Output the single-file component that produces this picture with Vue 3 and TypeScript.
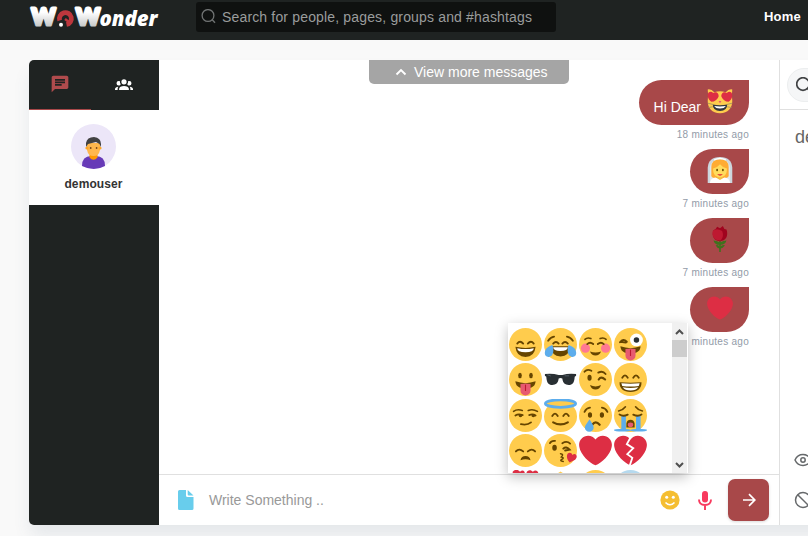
<script setup lang="ts">
interface Shape {
  d: string
  fill: string
  stroke: string
  width: number
}

interface Message {
  id: number
  text: string
  emoji: string
  time: string
}

const brown = '#664500'

const fill = (d: string, color: string): Shape => ({ d, fill: color, stroke: 'none', width: 0 })
const line = (d: string, width = 2, color = brown): Shape => ({ d, fill: 'none', stroke: color, width })
const dot = (cx: number, cy: number, rx: number, ry = rx, color = brown): Shape =>
  fill(`M${cx - rx} ${cy}a${rx} ${ry} 0 1 0 ${rx * 2} 0a${rx} ${ry} 0 1 0 ${-rx * 2} 0z`, color)

const face = dot(18, 18, 18, 18, '#ffcc4d')
const heartPath =
  'M35.885 11.833c0-5.45-4.418-9.868-9.867-9.868-3.308 0-6.227 1.633-8.018 4.129-1.791-2.496-4.71-4.129-8.017-4.129-5.45 0-9.868 4.417-9.868 9.868 0 .772.098 1.52.266 2.241C1.751 22.587 11.216 31.568 18 34.034c6.783-2.466 16.249-11.447 17.617-19.959.17-.721.268-1.469.268-2.242z'
const closedEyes = line('M9 17Q12 13 15.5 17M20.5 17Q24 13 27 17')
const tongue = [
  fill('M7 20Q18 24 29 20Q29 25 24 27H12Q7 25 7 20z', brown),
  fill('M12.5 23Q18 21.5 23.5 23V30a5.5 5.5 0 0 1-11 0z', '#e75a70'),
  line('M18 24V30', 1.2, '#be1931'),
]

const emojis: Record<string, Shape[]> = {
  smile: [
    face,
    closedEyes,
    fill('M7 20.5Q18 23 29 20.5Q28 31.5 18 31.5T7 20.5z', brown),
    fill('M9 22Q18 24 27 22Q27 26.5 18 26.5T9 22z', '#fff'),
  ],
  joy: [
    face,
    line('M4.5 14Q7 10 11 9.5M31.5 14Q29 10 25 9.5'),
    line('M10 17Q13 13.5 16 17M20 17Q23 13.5 26 17'),
    fill('M8 20H28Q28 31 18 31T8 20z', brown),
    fill('M10 21H26Q26 25 18 25T10 21z', '#fff'),
    fill('M9 18.5C11 22 11 31 5.5 31.5C-.5 32 .2 25 2.8 22Q5 20 9 18.5zM27 18.5C25 22 25 31 30.5 31.5C36.5 32 35.8 25 33.2 22Q31 20 27 18.5z', '#5dadec'),
  ],
  blush: [
    face,
    dot(7, 22, 5, 5, '#ff7892'),
    dot(29, 22, 5, 5, '#ff7892'),
    line('M6.5 12.5Q9 10 13 11.5M29.5 12.5Q27 10 23 11.5', 1.8),
    line('M9 17.5Q12 14.5 15.5 17.5M20.5 17.5Q24 14.5 27 17.5'),
    fill('M12 25.5Q18 28 24 25.5Q22.5 30 18 30T12 25.5z', brown),
  ],
  zany: [
    face,
    line('M6.5 15.5Q10 11 14 15M7 15L13 16'),
    dot(24.5, 13, 7, 7, '#fff'),
    dot(24.5, 13, 3, 3, '#292f33'),
    ...tongue,
  ],
  tongue: [face, dot(12, 13.5, 2, 3), dot(24, 13.5, 2, 3), ...tongue],
  shades: [
    fill('M1 12Q9 11 16 13H20Q27 11 35 12V14L33.5 15C33 22 31 24 27 24C23 24 20.5 22 20 17Q18 15.5 16 17C15.5 22 13 24 9 24C5 24 3 22 2.5 15L1 14z', '#292f33'),
    line('M4 13L7 14M23 14L27 14', 1, '#55616a'),
  ],
  wink: [
    face,
    dot(11.5, 16, 2.3, 3.3),
    line('M6 9.5Q9 6 13.5 8.5M21 10.5Q26 8 29 12'),
    line('M21.5 18Q24 14 28.5 18', 2.3),
    fill('M12 24Q18 27 24 24Q22.5 29 18 29T12 24z', brown),
  ],
  grin: [
    face,
    line('M9 16Q12 11 15 16M21 16Q24 11 27 16'),
    fill('M6 21Q18 22 30 21Q30 31.5 18 31.5T6 21z', brown),
    fill('M8 22Q18 23 28 22L27 25Q18 26.5 9 25zM9.5 26.5Q18 28 26.5 26.5Q24 30 18 30T9.5 26.5z', '#fff'),
  ],
  smirk: [
    face,
    line('M5 13.5Q9 10.5 14.500 12.500M21 12.500Q26 10.500 31 13.500', 1.800),
    line('M7 18Q10 16 15 17.500M22 17.500Q26 16 29 18'),
    dot(12.500, 18.300, 2, 1.600),
    dot(26.500, 18.300, 2, 1.600),
    line('M13 27.500Q20 29 24 25.500'),
  ],
  angel: [
    dot(18, 19, 18, 17, '#ffcc4d'),
    line('M9 18.5Q12 13.5 15 18.5M21 18.5Q24 13.5 27 18.5'),
    line('M10 25.5Q18 30 26 25.5', 2.4),
    dot(18, 5, 16, 4, '#ffcc4d'),
    line('M1.5 5a16.5 4 0 1 0 33 0a16.5 4 0 1 0-33 0z', 3, '#5dadec'),
  ],
  cry: [
    face,
    dot(12, 17.5, 2.3, 3),
    dot(25, 17.5, 2.3, 3),
    line('M6 14Q8 10 12 9.5M31 14Q29 10 25 9.5'),
    line('M14.5 28Q18 23 22.5 28', 2.5),
    fill('M11.5 22C13 25 16 28 16 31a4.8 4.8 0 0 1-9.6 0C6.400 28 10 25 11.500 22z', '#5dadec'),
  ],
  sob: [
    face,
    fill('M8 18H13V34H8zM24 18H29V34H24z', '#5dadec'),
    line('M5 13Q10 12 12.500 8.500M31 13Q26 12 23.500 8.500', 1.700),
    line('M6 17Q10 19.500 15 17M21 17Q26 19.500 30 17'),
    fill('M13.500 31V27Q14 22.500 18 22.500T22.500 27V31z', brown),
    dot(18, 28, 3, 2.500, '#e75a70'),
    dot(9, 34, 9.500, 1.500, '#5dadec'),
    dot(27, 34, 9.500, 1.500, '#5dadec'),
  ],
  sad: [
    face,
    line('M7.500 19Q11 15 15.500 19M20.500 19Q25 15 28.500 19'),
    fill('M12.500 28.500Q13.500 24 18 24T23.500 28.500Q18 26.500 12.500 28.500z', brown),
  ],
  kiss: [
    face,
    dot(11.500, 15, 2.500, 3.300),
    line('M6.500 10Q8 7 12 7.500M20 10Q25 7 28.500 10.500'),
    line('M21 16Q24 13 28 17L23 18'),
    line('M18 21.500Q22 22 19 25Q23 26 19 28Q17 29.500 21 30', 1.600),
    fill('M25 24C25 20 30 19 31 23C34 20 38 24 34 28L28 31C26 29 25 27 25 24z', '#dd2e44'),
  ],
  heart: [fill(heartPath, '#dd2e44')],
  broken: [fill(heartPath, '#dd2e44'), line('M18.500 3L14 11L21 15.500L14.500 22L20 26L17 35', 2, '#fff')],
  hearts: [
    fill('M4 2C6-1 10-1 12 2C15-1 18 1 17 5L10 14L4 9zM19 4C19 0 24-1 26 2C29-1 33 1 32 6L26 14z', '#dd2e44'),
  ],
  peak: [fill('M16 3L18 1.500L20 3Q33 7 35 18H1Q4 7 16 3z', '#ffcc4d')],
  round: [face],
  cold: [dot(18, 18, 18, 18, '#b5d9ee')],
  cat: [
    fill('M1 2Q6 1 10 6Q18 3 26 6Q30 1 35 2Q34 9 35 18C35 28 29 35 18 35S1 28 1 18Q2 9 1 2z', '#ffcc4d'),
    fill('M8 23Q18 25 28 23Q28 32 18 32T8 23z', '#31373d'),
    fill('M10 25Q18 26 26 25Q24 28.500 18 28.500T10 25z', '#fff'),
    line('M1 21L9 23M2 27L8 26M35 21L27 23M34 27L28 26', 1.200, '#a3925f'),
    fill('M16 18H20L18 21z', '#e75a70'),
    fill('M1 10C1 5 6 4 8.500 7C12 4 17 7 16 12C14 16 11 19 6 19C3 17 1 14 1 10zM35 10C35 5 30 4 27.500 7C24 4 19 7 20 12C22 16 25 19 30 19C33 17 35 14 35 10z', '#dd2e44'),
  ],
  bride: [
    fill('M1 36V15Q2 0 18 0T35 15V36z', '#ccd6dd'),
    fill('M4 36V16Q5 3 18 3T32 16V36z', '#e1e8ed'),
    fill('M6 14Q6 3 18 3T30 14V24Q31 29 25 29H11Q5 29 6 24z', '#ffac33'),
    fill('M14 24H22V31L18 34L14 31z', '#f5bd45'),
    fill('M4 36Q5 29 12 28.500L18 32L24 28.500Q31 29 32 36z', '#fff'),
    fill('M8.500 16Q14 15 18 10Q22 15 27.500 16C28 24 24 28 18 28S8 24 8.500 16z', '#ffdc5d'),
    dot(14, 18, 1.200, 1.700),
    dot(22, 18, 1.200, 1.700),
    fill('M14 24H22Q18 28 14 24z', '#df1f32'),
    line('M10 4Q18 0 26 4', 2, '#fff'),
  ],
  rose: [
    line('M18 18V36', 2.200, '#3e721d'),
    fill('M9 20Q13 20 18 23Q23 20 27 20Q25 26 19 26Q11 27 9 20zM12 27Q15 25 18 29Q22 25 25 27Q22 31 18 31T12 27z', '#3e721d'),
    fill('M9 6L12 4L14 1L18 3L22 0L24 4L27 5C30 14 26 21 18 21S6 14 9 6z', '#a0041e'),
    fill('M8 7Q13 2 21 7Q24 15 19 20C11 21 6 15 8 7z', '#be1931'),
  ],
}

const messages: Message[] = [
  { id: 1, text: 'Hi Dear', emoji: 'cat', time: '18 minutes ago' },
  { id: 2, text: '', emoji: 'bride', time: '7 minutes ago' },
  { id: 3, text: '', emoji: 'rose', time: '7 minutes ago' },
  { id: 4, text: '', emoji: 'heart', time: '7 minutes ago' },
]

const picker: string[] = [
  'smile', 'joy', 'blush', 'zany',
  'tongue', 'shades', 'wink', 'grin',
  'smirk', 'angel', 'cry', 'sob',
  'sad', 'kiss', 'heart', 'broken',
  'hearts', 'peak', 'round', 'cold',
]
</script>

<template>
  <div class="page">
    <header class="topbar">
      <svg class="logo" width="132" height="30" viewBox="0 0 132 30" role="img" aria-label="WoWonder">
        <defs>
          <linearGradient id="silver" gradientUnits="userSpaceOnUse" x1="0" y1="4" x2="0" y2="25">
            <stop offset="0.3" stop-color="#ffffff" />
            <stop offset="1" stop-color="#c4c6c6" />
          </linearGradient>
        </defs>
        <path d="M31.700 18.500A6 6 0 1 1 38.500 22.500" fill="none" stroke="#bd373d" stroke-width="4.800" />
        <path d="M37 17L41 20" stroke="#bd373d" stroke-width="2.500" />
        <circle cx="33" cy="22.800" r="2" fill="#fff" />
        <text class="logo-w" x="3.500" y="23" textLength="24" lengthAdjust="spacingAndGlyphs">W</text>
        <text class="logo-w" x="48" y="23" textLength="24" lengthAdjust="spacingAndGlyphs">W</text>
        <text class="logo-rest" x="71.500" y="24" textLength="58" lengthAdjust="spacingAndGlyphs">onder</text>
      </svg>
      <div class="search">
        <svg width="16" height="16" viewBox="0 0 16 16" fill="none" stroke="#707373" stroke-width="1.300">
          <circle cx="7" cy="6.500" r="5.900" />
          <path d="M11.200 10.700L14 13.700" />
        </svg>
        <span>Search for people, pages, groups and #hashtags</span>
      </div>
      <nav class="nav">Home</nav>
    </header>

    <main class="chat">
      <aside class="sidebar">
        <div class="tabs">
          <div class="tab active">
            <svg width="20" height="20" viewBox="0 0 24 24" fill="#b04b4d">
              <path d="M20 2H4c-1.100 0-1.990.9-1.990 2L2 22l4-4h14c1.100 0 2-.9 2-2V4c0-1.100-.9-2-2-2zM6 9h12v2H6V9zm8 5H6v-2h8v2zm4-6H6V6h12v2z" />
            </svg>
          </div>
          <div class="tab">
            <svg width="18" height="18" viewBox="0 0 24 24" fill="#fff">
              <path d="M12,5.500A3.500,3.500 0 0,1 15.500,9A3.500,3.500 0 0,1 12,12.500A3.500,3.500 0 0,1 8.500,9A3.500,3.500 0 0,1 12,5.500M5,8C5.560,8 6.080,8.150 6.530,8.420C6.380,9.850 6.800,11.270 7.660,12.380C7.160,13.340 6.160,14 5,14A3,3 0 0,1 2,11A3,3 0 0,1 5,8M19,8A3,3 0 0,1 22,11A3,3 0 0,1 19,14C17.840,14 16.840,13.340 16.340,12.380C17.200,11.270 17.620,9.850 17.470,8.420C17.920,8.150 18.440,8 19,8M5.500,18.250C5.500,16.180 8.410,14.500 12,14.500C15.590,14.500 18.500,16.180 18.500,18.250V20H5.500V18.250M0,20V18.500C0,17.110 1.890,15.940 4.450,15.600C3.860,16.280 3.500,17.220 3.500,18.250V20H0M24,20H20.500V18.250C20.500,17.220 20.140,16.280 19.550,15.600C22.110,15.940 24,17.110 24,18.500V20Z" />
            </svg>
          </div>
        </div>
        <div class="contact">
          <svg width="45" height="45" viewBox="0 0 45 45">
            <circle cx="22.500" cy="22.500" r="22.500" fill="#ece6f8" />
            <path d="M11 42Q11 32 20 32H25Q34 32 34 42Q23 48 11 42z" fill="#673ab7" />
            <path d="M18.500 29H26.500V33.500Q22.500 38 18.500 33.500z" fill="#ff9800" />
            <path d="M16 19H29V26Q28 32 22.500 32T16 26z" fill="#ffb74d" />
            <circle cx="16" cy="24" r="1.600" fill="#ffa726" />
            <circle cx="29" cy="24" r="1.600" fill="#ffa726" />
            <path d="M15 23V19Q16 13 23 13Q30 14 30 20V23L28.500 20L25 18L17 20z" fill="#424242" />
            <circle cx="19.700" cy="24" r=".9" fill="#784719" />
            <circle cx="25.600" cy="24" r=".9" fill="#784719" />
          </svg>
          <b>demouser</b>
        </div>
      </aside>

      <section class="conversation">
        <div class="thread">
          <div class="more">
            <svg width="12" height="8" viewBox="0 0 12 8" fill="none" stroke="#fff" stroke-width="1.900"><path d="M1.500 6.500L6 2L10.500 6.500" /></svg>
            <span>View more messages</span>
          </div>
          <div v-for="m in messages" :key="m.id" class="message">
            <div class="bubble">
              <span v-if="m.text">{{ m.text }}</span>
              <svg width="26" height="26" viewBox="0 0 36 36">
                <path v-for="(s, i) in emojis[m.emoji]" :key="i" :d="s.d" :fill="s.fill" :stroke="s.stroke" :stroke-width="s.width" />
              </svg>
            </div>
            <time>{{ m.time }}</time>
          </div>
        </div>

        <footer class="composer">
          <svg class="file" width="16" height="20" viewBox="0 0 16 20" fill="#68cdec">
            <path d="M1.500 0H8V5.500Q8 7 9.500 7H15.500V18.500Q15.500 20 14 20H1.500Q0 20 0 18.500V1.500Q0 0 1.500 0zM9.700 0L15.500 5.400H10.500Q9.700 5.400 9.700 4.600z" />
          </svg>
          <span class="placeholder">Write Something ..</span>
          <svg class="smiley" width="20" height="20" viewBox="0 0 20 20">
            <circle cx="10" cy="10" r="9.600" fill="#f5be31" />
            <circle cx="6.700" cy="7.300" r="1.500" fill="#fff" />
            <circle cx="13.300" cy="7.300" r="1.500" fill="#fff" />
            <path d="M5.500 12.500Q10 17 14.500 12.500" fill="none" stroke="#fff" stroke-width="1.600" />
          </svg>
          <svg class="mic" width="14" height="19" viewBox="0 0 14 19">
            <rect x="4" y="0" width="6" height="11.500" rx="3" fill="#f83a5e" />
            <path d="M1 8.500Q1 14 7 14T13 8.500M7 14V19" fill="none" stroke="#f83a5e" stroke-width="1.900" />
          </svg>
          <button class="send" aria-label="Send">
            <svg width="14" height="14" viewBox="0 0 14 14" fill="none" stroke="#fff" stroke-width="1.700"><path d="M1 7H12.500M7 1.200L12.800 7L7 12.800" /></svg>
          </button>
        </footer>

        <div class="picker">
          <div class="grid">
            <svg v-for="name in picker" :key="name" width="33" height="33" viewBox="0 0 36 36">
              <path v-for="(s, i) in emojis[name]" :key="i" :d="s.d" :fill="s.fill" :stroke="s.stroke" :stroke-width="s.width" stroke-linecap="round" />
            </svg>
          </div>
          <div class="scrollbar">
            <svg width="15" height="17" viewBox="0 0 15 17" fill="none" stroke="#505050" stroke-width="2"><path d="M4 11L7.500 7.500L11 11" /></svg>
            <i class="thumb"></i>
            <svg class="down" width="15" height="17" viewBox="0 0 15 17" fill="none" stroke="#505050" stroke-width="2"><path d="M4 7L7.500 10.500L11 7" /></svg>
          </div>
        </div>
      </section>

      <aside class="details">
        <div class="find">
          <span class="round">
            <svg width="18" height="18" viewBox="0 0 18 18" fill="none" stroke="#404244" stroke-width="1.700"><circle cx="7" cy="7" r="6.300" /><path d="M11.500 11.500L16 16" /></svg>
          </span>
        </div>
        <div class="name">demouser</div>
        <div class="actions">
          <svg width="18" height="18" viewBox="0 0 18 18" fill="none" stroke="#66696b" stroke-width="1.500">
            <path d="M1 9Q3.500 3.500 9 3.500T17 9Q14.500 14.500 9 14.500T1 9z" /><circle cx="9" cy="9" r="2.200" />
          </svg>
          <svg width="18" height="18" viewBox="0 0 18 18" fill="none" stroke="#66696b" stroke-width="1.500"><circle cx="9" cy="9" r="7.500" /><path d="M3.700 3.700L14.300 14.300" /></svg>
        </div>
      </aside>
    </main>
  </div>
</template>

<style>
body {
  background: #f9f9f9;
  overflow: hidden;
}
</style>

<style scoped>
.page {
  width: 808px;
  height: 536px;
  overflow: hidden;
  background: #f9f9f9;
  font-family: "Liberation Sans", Arial, sans-serif;
}
.page * {
  box-sizing: border-box;
}
svg {
  display: block;
  flex: none;
}
.topbar {
  height: 40px;
  padding-left: 28px;
  display: flex;
  background: #1f2322;
}
.logo {
  margin-top: 2px;
}
.logo-w {
  font: 900 23px Lato, sans-serif;
  fill: url(#silver);
  stroke: url(#silver);
  stroke-width: 3.2px;
  stroke-linejoin: round;
}
.logo-rest {
  font: italic 800 21px "Open Sans", sans-serif;
  fill: #fff;
}
.search {
  width: 360px;
  height: 30px;
  margin: 2px 0 0 36px;
  padding-left: 5px;
  display: flex;
  align-items: center;
  gap: 5px;
  border-radius: 3px;
  background: #0f1110;
  color: #9a9c9c;
  font-size: 14px;
  letter-spacing: 0.16px;
  white-space: nowrap;
}
.nav {
  margin: 9px 0 0 208px;
  color: #fff;
  font-size: 13px;
  font-weight: bold;
  letter-spacing: 0.2px;
  line-height: 16px;
}
.chat {
  width: 1000px;
  height: 465px;
  margin: 20px 0 0 29px;
  display: flex;
  border-radius: 5px;
  background: #fff;
  box-shadow: 0 12px 18px -2px rgba(70, 100, 120, 0.12);
}
.sidebar {
  width: 130px;
  flex: none;
  border-radius: 5px 0 0 5px;
  overflow: hidden;
  background: #1f2322;
}
.tabs {
  height: 50px;
  display: flex;
}
.tab {
  width: 67px;
  padding: 15px 0 0 24px;
}
.tab.active {
  width: 62px;
  padding: 14px 0 0 21px;
  border-bottom: 1px solid #a84849;
}
.contact {
  height: 95px;
  padding: 14px 1px 0 0;
  display: flex;
  flex-direction: column;
  align-items: center;
  gap: 7px;
  background: #fff;
  color: #333;
  font-size: 12px;
  letter-spacing: 0.1px;
  line-height: 16px;
}
.conversation {
  position: relative;
  width: 621px;
  flex: none;
  display: flex;
  flex-direction: column;
  border-right: 1px solid #e0e0e0;
}
.thread {
  height: 414px;
  padding: 0 30px 0 0;
  display: flex;
  flex-direction: column;
  align-items: flex-end;
}
.more {
  width: 200px;
  height: 24px;
  margin: 0 180px -4px 0;
  padding-left: 26px;
  display: flex;
  align-items: center;
  gap: 7px;
  border-radius: 0 0 5px 5px;
  background: #a5a5a5;
  color: #fff;
  font-size: 14px;
  white-space: nowrap;
}
.message {
  height: 69.1px;
  display: flex;
  flex-direction: column;
  align-items: flex-end;
}
.bubble {
  height: 45px;
  padding: 0 16px 0 15px;
  display: flex;
  gap: 6px;
  border-radius: 25px 0 25px 25px;
  background: #a84849;
  color: #fff;
  font-size: 14px;
}
.bubble:not(:has(span)) {
  padding-left: 17px;
}
.bubble span {
  margin-top: 19px;
  line-height: 16px;
}
.bubble svg {
  margin-top: 8px;
}
time {
  margin-top: 3px;
  color: #929ba8;
  font-size: 10px;
  line-height: 13px;
  letter-spacing: 0.28px;
}
.composer {
  height: 51px;
  padding: 0 10px 0 19px;
  display: flex;
  align-items: center;
  border-top: 1px solid #e0e0e0;
}
.placeholder {
  flex: 1;
  margin-left: 15px;
  color: #999;
  font-size: 14px;
}
.mic {
  margin: 0 16px 0 18px;
}
.send {
  width: 41px;
  height: 42px;
  padding: 0;
  display: flex;
  align-items: center;
  justify-content: center;
  border: 0;
  border-radius: 7px;
  background: #a84849;
  box-shadow: 0 1px 3px rgba(0, 0, 0, 0.15);
}
.picker {
  position: absolute;
  left: 349px;
  top: 263px;
  width: 180px;
  height: 150px;
  display: flex;
  overflow: hidden;
  background: #fff;
  box-shadow: 0 4px 12px rgba(0, 0, 0, 0.25);
}
.grid {
  width: 164px;
  padding: 5px 0 0 1px;
  display: grid;
  grid-template-columns: repeat(4, 35.1px);
  grid-auto-rows: 35.4px;
}
.scrollbar {
  width: 16px;
  display: flex;
  flex-direction: column;
  background: linear-gradient(to right, #f0f0f0 15px, #fff 15px);
}
.thumb {
  width: 15px;
  height: 17px;
  background: #cdcdcd;
}
.down {
  margin-top: auto;
}
.details {
  flex: 1;
  display: flex;
  flex-direction: column;
}
.find {
  height: 50px;
  padding: 8px 0 0 7px;
  border-bottom: 1px solid #e0e0e0;
}
.round {
  width: 150px;
  height: 34px;
  padding: 8px;
  display: block;
  border: 1px solid #eceeef;
  border-radius: 17px;
  background: #f5f6f7;
}
.name {
  padding: 17px 0 0 15px;
  color: #666;
  font-size: 18px;
  line-height: 21px;
}
.actions {
  margin-top: auto;
  padding: 0 0 16px 14px;
  display: flex;
  flex-direction: column;
  gap: 22px;
}
</style>
